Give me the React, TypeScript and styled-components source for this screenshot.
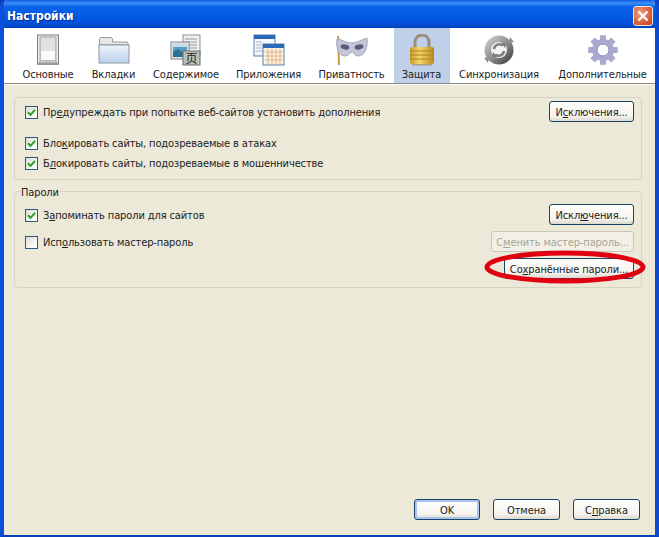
import React from "react";
import styled, { createGlobalStyle } from "styled-components";

const UI = `"DejaVu Sans Condensed", "DejaVu Sans", "Noto Sans", sans-serif`;

const Global = createGlobalStyle`
  html, body { margin: 0; padding: 0; background: #0a3fc4; }
  body { font-family: ${UI}; font-stretch: condensed; font-size: 11px; letter-spacing: -0.12px; color: #222; }
`;

const Win = styled.div`
  width: 659px; height: 537px; box-sizing: border-box; display: flex; flex-direction: column;
  background: #ece9d8; border-left: 4px solid #0a50dc; border-right: 4px solid #0a4ad0; border-bottom: 2px solid #0a3fb8;
  border-radius: 7px 7px 0 0; overflow: hidden;
`;
const TitleBar = styled.div`
  height: 28px; margin: 0 -4px; padding: 4px 6px 0 7px; box-sizing: border-box; flex: none; display: flex; align-items: center; justify-content: space-between;
  background: linear-gradient(#0a5ae0 0, #3c90f6 3px, #0a62ea 7px, #0458e2 18px, #0450d8 24px, #0240b8 28px);
`;
const TitleText = styled.span`
  color: #fff; font: bold 12px ${UI}; font-stretch: condensed; letter-spacing: 0; text-shadow: 1px 1px 1px #0a2a90;
`;
const Close = styled.div`
  width: 20px; height: 20px; box-sizing: border-box; display: flex; align-items: center; justify-content: center;
  border: 1px solid #f0e6e0; border-radius: 3px; background: radial-gradient(circle at 35% 35%, #f0a080, #d8552f 70%, #c03c18);
`;
const Toolbar = styled.div`
  height: 56px; flex: none; box-sizing: border-box; padding-left: 9.5px; display: flex; background: #fff;
  border-bottom: 1px solid #8a8a86; box-shadow: 0 1px 0 #fbfaf4;
`;
const Tab = styled.div<{ $w: number; $on?: boolean }>`
  width: ${p => p.$w}px; flex: none; display: flex; flex-direction: column; align-items: center;
  background: ${p => (p.$on ? "#bfd0e8" : "transparent")};
`;
const IconSlot = styled.div`
  height: 32px; margin-top: 6px; display: flex; align-items: center; justify-content: center;
`;
const TabLabel = styled.span`
  margin-top: 2px; font-size: 11px; line-height: 14px; white-space: nowrap; color: #222;
`;
const Content = styled.div`
  flex: 1; display: flex; flex-direction: column; padding: 13px 13px 15px 10px; position: relative;
`;
const Group = styled.fieldset<{ $h: number; $top?: number }>`
  margin: ${p => p.$top ?? 0}px 0 0; padding: 0 7px 0 10px; height: ${p => p.$h}px; box-sizing: border-box; min-width: 0;
  border: 1px solid #d6d3c2; border-radius: 4px; display: flex; flex-direction: column;
`;
const Legend = styled.legend`
  padding: 4px 1px 0 0; margin-left: -4px; font-size: 11px; line-height: 14px; color: #222;
`;
const Row = styled.div<{ $top: number }>`
  margin-top: ${p => p.$top}px; display: flex; align-items: center; justify-content: space-between; min-height: 21px;
`;
const EndRow = styled(Row)`
  justify-content: flex-end;
`;
const Check = styled.label`
  display: flex; align-items: center; gap: 5px; padding-top: 2px; font-size: 11px; line-height: 14px; color: #222; white-space: nowrap;
`;
const CheckText = styled.span`
  padding-top: 1px;
`;
const Box = styled.span`
  width: 13px; height: 13px; box-sizing: border-box; flex: none; display: flex; align-items: center; justify-content: center;
  border: 1px solid #2c5a7c; background: linear-gradient(135deg, #dcdcd7, #f8f8f4 70%, #fff);
`;
const Btn = styled.button<{ $w: number; $default?: boolean }>`
  width: ${p => p.$w}px; height: 21px; padding: 1px 0 0; box-sizing: border-box; font: 11px ${UI}; font-stretch: condensed; letter-spacing: -0.12px; color: #222;
  border: 1px solid ${p => (p.disabled ? "#c9c7ba" : "#1c4468")}; border-radius: 3px;
  background: ${p => (p.disabled ? "#f2f0e6" : "linear-gradient(#fefefd, #f4f3ee 75%, #dcd8cc)")};
  box-shadow: ${p => (p.$default ? "inset 0 0 0 2px #a8c4ec" : "none")};
  white-space: nowrap;
  &:disabled { color: #a8a596; }
`;
const SavedWrap = styled.div`
  position: relative; display: flex;
`;
const Ellipse = styled.svg`
  position: absolute; left: -20px; top: -8px; pointer-events: none;
`;
const Footer = styled.div`
  margin-top: auto; display: flex; justify-content: flex-end; gap: 13px; padding-right: 2px;
`;

const Tick = () => (
  <svg width="9" height="9" viewBox="0 0 9 9"><path d="M1 4.2 3.5 6.8 8 1.8" fill="none" stroke="#21a121" strokeWidth="2" /></svg>
);
const Cb = ({ on, children }: { on?: boolean; children: React.ReactNode }) => (
  <Check><Box>{on && <Tick />}</Box><CheckText>{children}</CheckText></Check>
);

const SwitchIcon = () => (
  <svg width="24" height="32" viewBox="0 0 24 32">
    <rect x="1.5" y="1" width="21" height="28" fill="#f0f0ee" stroke="#7a7a78" />
    <rect x="4" y="3" width="16" height="24" fill="#d8d8d6" stroke="#a0a09e" />
    <rect x="5" y="4" width="14" height="13" fill="#e0e0de" />
    <rect x="5" y="17" width="14" height="9" fill="#fafafa" />
    <rect x="1" y="29" width="22" height="2" fill="#9a9a98" />
  </svg>
);
const FolderIcon = () => (
  <svg width="32" height="30" viewBox="0 0 32 30">
    <defs><linearGradient id="fd" x1="0" y1="0" x2="0" y2="1"><stop offset="0" stopColor="#eef3fb" /><stop offset="1" stopColor="#bcd0ee" /></linearGradient></defs>
    <path d="M1.500 10V3.500l1-1h11l1 1V7h14.500l1 1v2z" fill="#e6e6e4" stroke="#9a9a98" />
    <rect x="1" y="10" width="30" height="18" fill="url(#fd)" stroke="#8e96a4" />
  </svg>
);
const ContentIcon = () => (
  <svg width="32" height="32" viewBox="0 0 32 32">
    <rect x="13" y="1" width="17" height="21" fill="#f0f0f0" stroke="#909090" />
    <path d="M15 5h12M15 8h12M19 11h8M19 14h8" stroke="#8f9aa8" />
    <rect x="1" y="8" width="18" height="17" fill="#dfe3e8" stroke="#808890" />
    <rect x="3" y="10" width="14" height="13" fill="#5a9cc8" />
    <path d="M3 18l5-3 4 3 5-1v6H3z" fill="#2a6e98" />
    <rect x="3" y="10" width="14" height="3" fill="#c6dcec" />
    <rect x="13" y="17" width="17" height="14" fill="#b8c0b8" stroke="#687068" />
    <text x="21.500" y="29" textAnchor="middle" fontFamily="Noto Sans CJK SC, sans-serif" fontSize="12" fill="#222">页</text>
  </svg>
);
const AppsIcon = () => (
  <svg width="32" height="32" viewBox="0 0 32 32">
    <rect x="1" y="1" width="21" height="21" fill="#f4f6fa" stroke="#6080a8" />
    <rect x="1" y="1" width="21" height="4" fill="#2a68b8" />
    <path d="M3 8h6M3 11h6M3 14h6M3 17h6" stroke="#a0b4d0" />
    <rect x="10" y="10" width="21" height="21" fill="#f8f2e4" stroke="#6080a8" />
    <rect x="10" y="10" width="21" height="4" fill="#2a68b8" />
    <path d="M12 18h17M12 22h17M12 26h17M15 15v15M19 15v15M23 15v15M27 15v15" stroke="#e6b080" />
  </svg>
);
const MaskIcon = () => (
  <svg width="34" height="32" viewBox="0 0 34 32">
    <path d="M3 2 L4 31" stroke="#c8a040" strokeWidth="2" fill="none" />
    <path d="M2 5c6 1 10 4 15 4s9-3 15-5c1 9-2 18-9 18-4 0-4-4-6-4s-3 4-7 4C3 22 1 13 2 5z" fill="#c6c6da" stroke="#a4a4bc" />
    <ellipse cx="10" cy="13" rx="4.500" ry="2.500" fill="#5c5c74" transform="rotate(12 10 13)" />
    <ellipse cx="24" cy="13" rx="4.500" ry="2.500" fill="#5c5c74" transform="rotate(-12 24 13)" />
  </svg>
);
const LockIcon = () => (
  <svg width="28" height="32" viewBox="0 0 28 32">
    <defs><linearGradient id="lk" x1="0" y1="0" x2="1" y2="0"><stop offset="0" stopColor="#c89a28" /><stop offset=".4" stopColor="#f4d868" /><stop offset="1" stopColor="#b88a20" /></linearGradient></defs>
    <path d="M7 14V8a7 7 0 0 1 14 0v6" fill="none" stroke="#9a9078" strokeWidth="3" />
    <rect x="2" y="13" width="24" height="17" rx="2" fill="url(#lk)" />
    <path d="M2 17h24M2 21h24M2 25h24" stroke="#a88420" />
    <rect x="4" y="30" width="20" height="1.500" fill="#a8a080" />
  </svg>
);
const SyncIcon = () => (
  <svg width="32" height="32" viewBox="0 0 32 32">
    <defs><linearGradient id="sy" x1="0" y1="0" x2="1" y2="1"><stop offset="0" stopColor="#d8d8d8" /><stop offset=".6" stopColor="#808080" /><stop offset="1" stopColor="#303030" /></linearGradient></defs>
    <circle cx="16" cy="16" r="14.500" fill="url(#sy)" />
    <circle cx="16" cy="16" r="8" fill="#f2f2f2" />
    <path d="M11 15a5.500 5.500 0 0 1 9-3.500M21 17a5.500 5.500 0 0 1-9 3.500" fill="none" stroke="#7c7c7c" strokeWidth="2.500" />
    <path d="M18 8.500 23 9.500 22 14zM14 23.500 9 22.500 10 18z" fill="#7c7c7c" />
    <path d="M27 3 31 8l-5 1zM5 29 1 24l5-1z" fill="#909090" />
  </svg>
);
const GearIcon = () => {
  const teeth = [0, 45, 90, 135, 180, 225, 270, 315];
  return (
    <svg width="30" height="30" viewBox="0 0 30 30">
      {teeth.map(a => <rect key={a} x="12" y="0.500" width="6" height="29" fill="#a8a8d0" transform={`rotate(${a} 15 15)`} />)}
      <circle cx="15" cy="15" r="11" fill="#a8a8d0" />
      <circle cx="15" cy="15" r="6" fill="#fff" stroke="#8c8cbc" />
    </svg>
  );
};

const tabs: { w: number; label: string; icon: React.ReactNode; on?: boolean }[] = [
  { w: 69, label: "Основные", icon: <SwitchIcon /> },
  { w: 62, label: "Вкладки", icon: <FolderIcon /> },
  { w: 83, label: "Содержимое", icon: <ContentIcon /> },
  { w: 82, label: "Приложения", icon: <AppsIcon /> },
  { w: 84, label: "Приватность", icon: <MaskIcon /> },
  { w: 56, label: "Защита", icon: <LockIcon />, on: true },
  { w: 99, label: "Синхронизация", icon: <SyncIcon /> },
  { w: 108, label: "Дополнительные", icon: <GearIcon /> },
];

export default function App() {
  return (
    <Win>
      <Global />
      <TitleBar>
        <TitleText>Настройки</TitleText>
        <Close>
          <svg width="12" height="12" viewBox="0 0 12 12"><path d="M1.500 1.500 10.500 10.500M10.500 1.500 1.500 10.500" stroke="#fff" strokeWidth="2.400" /></svg>
        </Close>
      </TitleBar>
      <Toolbar>
        {tabs.map(t => (
          <Tab key={t.label} $w={t.w} $on={t.on}>
            <IconSlot>{t.icon}</IconSlot>
            <TabLabel>{t.label}</TabLabel>
          </Tab>
        ))}
      </Toolbar>
      <Content>
        <Group $h={83}>
          <Row $top={3}>
            <Cb on>Пр<u>е</u>дупреждать при попытке веб-сайтов установить дополнения</Cb>
            <Btn $w={85}>И<u>с</u>ключения...</Btn>
          </Row>
          <Row $top={10}><Cb on>Бло<u>к</u>ировать сайты, подозреваемые в атаках</Cb></Row>
          <Row $top={-1}><Cb on>Б<u>л</u>окировать сайты, подозреваемые в мошенничестве</Cb></Row>
        </Group>
        <Group $h={106} $top={2}>
          <Legend>Пароли</Legend>
          <Row $top={4}>
            <Cb on>З<u>а</u>поминать пароли для сайтов</Cb>
            <Btn $w={85}>Искл<u>ю</u>чения...</Btn>
          </Row>
          <Row $top={6}>
            <Cb>Исп<u>о</u>льзовать мастер-пароль</Cb>
            <Btn $w={143} disabled>С<u>м</u>енить мастер-пароль...</Btn>
          </Row>
          <EndRow $top={6}>
            <SavedWrap>
              <Btn $w={130}>Со<u>х</u>ранённые пароли...</Btn>
              <Ellipse width="164" height="34" viewBox="0 0 164 34">
                <ellipse cx="81" cy="17" rx="78" ry="14" fill="none" stroke="#e00010" strokeWidth="5" />
              </Ellipse>
            </SavedWrap>
          </EndRow>
        </Group>
        <Footer>
          <Btn $w={66} $default>OK</Btn>
          <Btn $w={67}>Отмена</Btn>
          <Btn $w={67}>С<u>п</u>равка</Btn>
        </Footer>
      </Content>
    </Win>
  );
}
